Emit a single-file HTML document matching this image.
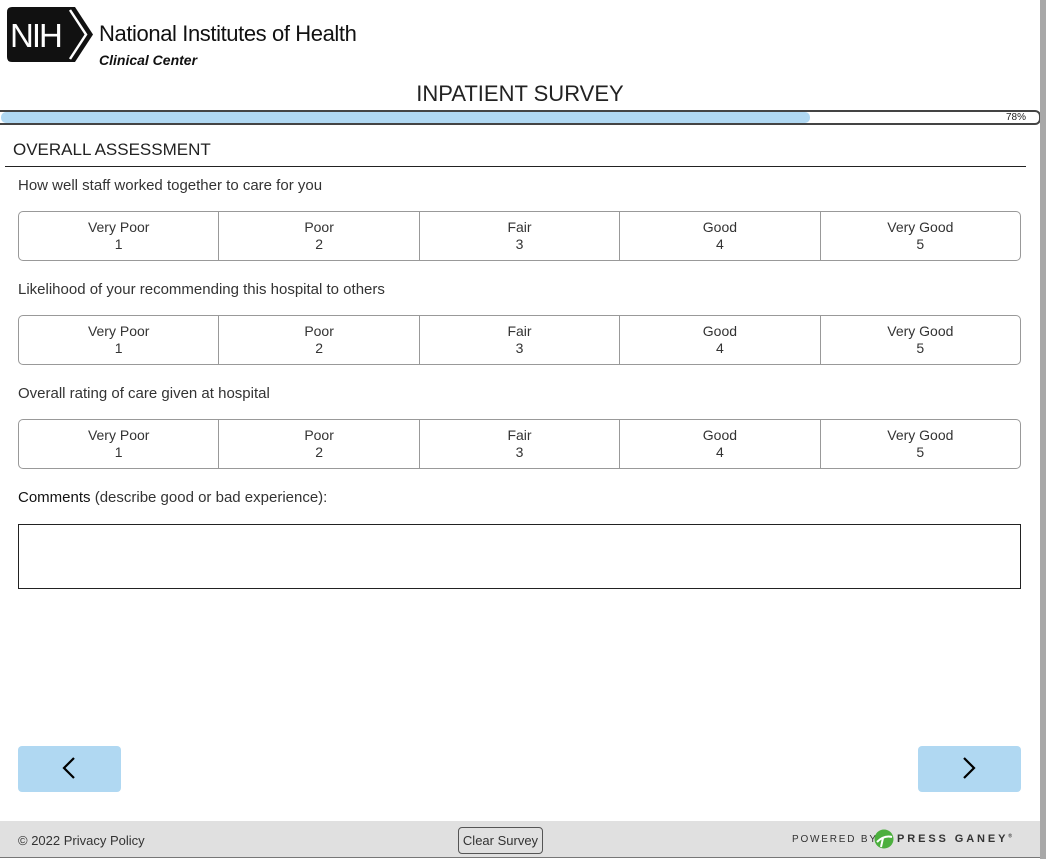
<!DOCTYPE html>
<html><head><style>
*{box-sizing:border-box;margin:0;padding:0}
body{width:1046px;height:859px;position:relative;background:#fff;font-family:"Liberation Sans",sans-serif;color:#222;overflow:hidden}
.abs{position:absolute}
.logo{left:7px;top:7px;width:88px;height:55px}
.q{position:absolute;left:18px;font-size:15px;color:#333}
.box{position:absolute;left:18px;width:1003px;height:50px;border:1px solid #999;border-radius:5px;display:flex;overflow:hidden}
.box div{flex:1;border-left:1px solid #999;text-align:center;font-size:14px;line-height:17px;padding-top:7px;color:#333}
.box div:first-child{border-left:none}
.btn{position:absolute;top:746px;width:103px;height:46px;background:#b0d8f2;border-radius:4px}
</style></head><body>
<svg class="abs logo" viewBox="0 0 88 55"><path d="M5 0H68L86 27.5L68 55H5Q0 55 0 50V5Q0 0 5 0Z" fill="#111"/><path d="M63 3L79 27.5L63 52" stroke="#fff" stroke-width="2.5" fill="none"/><text x="3" y="40" font-family="Liberation Sans" font-size="33" fill="#fff" letter-spacing="-2">NIH</text></svg>
<div class="abs" style="left:99px;top:21px;font-size:22px;color:#111;letter-spacing:-0.4px;font-weight:500">National Institutes of Health</div>
<div class="abs" style="left:99px;top:52px;font-size:14px;font-style:italic;font-weight:bold;color:#111">Clinical Center</div>
<div class="abs" style="left:0;width:1040px;top:81px;text-align:center;font-size:22px;color:#222">INPATIENT SURVEY</div>
<div class="abs" style="left:0;top:110px;width:1041px;height:15px;border-top:2px solid #444;border-bottom:2px solid #444;border-right:2px solid #444;border-radius:0 6px 6px 0"></div>
<div class="abs" style="left:1px;top:112px;width:809px;height:11px;background:#b0d8f2;border-radius:5px"></div>
<div class="abs" style="left:1006px;top:112px;font-size:10px;color:#222">78%</div>
<div class="abs" style="left:1040px;top:0;width:6px;height:859px;background:#a8a8a8"></div>
<div class="abs" style="left:13px;top:140px;font-size:17px;color:#222">OVERALL ASSESSMENT</div>
<div class="abs" style="left:5px;top:166px;width:1021px;height:1px;background:#222"></div>
<div class="q" style="top:177px">How well staff worked together to care for you</div>
<div class="box" style="top:211px"><div>Very Poor<br>1</div><div>Poor<br>2</div><div>Fair<br>3</div><div>Good<br>4</div><div>Very Good<br>5</div></div>
<div class="q" style="top:281px">Likelihood of your recommending this hospital to others</div>
<div class="box" style="top:315px"><div>Very Poor<br>1</div><div>Poor<br>2</div><div>Fair<br>3</div><div>Good<br>4</div><div>Very Good<br>5</div></div>
<div class="q" style="top:385px">Overall rating of care given at hospital</div>
<div class="box" style="top:419px"><div>Very Poor<br>1</div><div>Poor<br>2</div><div>Fair<br>3</div><div>Good<br>4</div><div>Very Good<br>5</div></div>
<div class="q" style="top:489px"><span style="color:#111">Comments</span> (describe good or bad experience):</div>
<div class="abs" style="left:18px;top:524px;width:1003px;height:65px;border:1px solid #222"></div>
<div class="btn" style="left:18px"><svg width="103" height="46"><path d="M56 12L46 22L56 32" stroke="#000" stroke-width="2.2" fill="none"/></svg></div>
<div class="btn" style="left:918px"><svg width="103" height="46"><path d="M46 12L56 22L46 32" stroke="#000" stroke-width="2.2" fill="none"/></svg></div>
<div class="abs" style="left:0;top:821px;width:1040px;height:37px;background:#e0e0e0;border-bottom:1px solid #777"></div>
<div class="abs" style="left:18px;top:833px;font-size:13px;color:#333">© 2022 Privacy Policy</div>
<div class="abs" style="left:458px;top:827px;width:85px;height:27px;border:1px solid #555;border-radius:4px;font-size:13px;text-align:center;line-height:25px;color:#333">Clear Survey</div>
<div class="abs" style="left:792px;top:834px;font-size:10px;letter-spacing:1.8px;color:#333">POWERED BY</div>
<svg class="abs" style="left:874px;top:829px" width="20" height="20"><circle cx="10" cy="10" r="9.5" fill="#4caf3e"/><path d="M3 13Q10 6 18 8M9 9L7 18" stroke="#fff" stroke-width="2" fill="none"/></svg>
<div class="abs" style="left:897px;top:833px;font-size:11px;letter-spacing:2.9px;font-weight:bold;color:#333">PRESS GANEY<sup style="font-size:5px">®</sup></div>
</body></html>
